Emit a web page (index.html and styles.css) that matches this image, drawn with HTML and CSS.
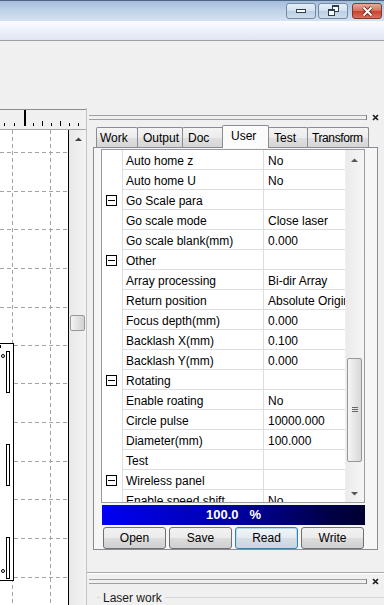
FILE: index.html
```html
<!DOCTYPE html>
<html lang="en">
<head>
    <meta charset="UTF-8">
    <title>Laser Parameter</title>
    <link rel="stylesheet" href="styles.css">
</head>
<body>
    <div class="titlebar">
        <span class="cbtn">
            <svg width="12" height="6" viewBox="0 0 12 6"><rect x="1.5" y="1.5" width="9" height="3" fill="#fff" stroke="#2c3e55"/></svg>
        </span>
        <span class="cbtn restore">
            <svg width="13" height="12" viewBox="0 0 13 12"><rect x="5.5" y="0.5" width="6" height="6" fill="#fff" stroke="#2c3e55"/><rect x="1.5" y="4.5" width="6" height="6" fill="#fff" stroke="#2c3e55"/><path d="M2 5.5H7M6 1.5H11" stroke="#2c3e55"/></svg>
        </span>
        <span class="cbtn close">
            <svg width="13" height="11" viewBox="0 0 13 11"><path d="M2.5 1.5L10.5 9.5M10.5 1.5L2.5 9.5" stroke="#5a1c14" stroke-width="3.6"/><path d="M2.5 1.5L10.5 9.5M10.5 1.5L2.5 9.5" stroke="#fff" stroke-width="2"/></svg>
        </span>
    </div>
    <div class="menubar"></div>

    <div class="main">
        <!-- drawing view -->
        <div class="view">
            <div class="view-inner">
                <svg class="ruler" width="86" height="22" viewBox="0 0 86 22">
                    <path d="M0 1.5H86" stroke="#8c8c8c"/>
                    <path d="M0 21.5H86" stroke="#a8a8a8"/>
                    <g stroke="#000">
                        <path d="M4.5 15V18M14.5 15V18M33.5 15V18M51.5 15V18M69.5 15V18M78.5 15V18"/>
                        <path d="M42.5 13V18M60.5 13V18"/>
                        <path d="M25 2V18" stroke-width="2"/>
                    </g>
                </svg>
                <div class="view-body">
                    <svg class="canvas" width="69" height="475" viewBox="0 0 69 475">
                        <rect width="69" height="475" fill="#fff"/>
                        <g stroke="#a4a4a4" stroke-dasharray="4 3" fill="none">
                            <path d="M12.5 0V475M50.5 0V475"/>
                            <path d="M0 22.5H68M0 61.5H68M0 99.5H68M0 138.5H68M0 177.5H68M0 215.5H68M0 253.5H68M0 292.5H68M0 331.5H68M0 369.5H68M0 408.5H68M0 447.5H68"/>
                        </g>
                        <path d="M68.5 0V475" stroke="#000"/>
                        <rect x="-2" y="213.5" width="15.5" height="237" fill="#fff" stroke="#000"/>
                        <g fill="#fff" stroke="#000">
                            <rect x="6.5" y="221.5" width="3" height="41"/>
                            <rect x="6.5" y="314.5" width="3" height="41"/>
                            <rect x="6.5" y="407.5" width="3" height="41"/>
                            <circle cx="3" cy="226" r="1.5"/>
                            <circle cx="3" cy="441" r="1.5"/>
                        </g>
                        <rect x="0" y="215" width="1" height="3" fill="#000"/>
                    </svg>
                    <div class="vbar">
                        <svg class="arrow" width="17" height="17" viewBox="0 0 17 17"><path d="M6 11H13L9.5 7.5Z" fill="#444"/></svg>
                        <div class="vthumb"></div>
                    </div>
                </div>
            </div>
        </div>

        <!-- parameter dock -->
        <div class="dock">
            <div class="dock-head">
                <span class="grip"></span>
                <span class="grip-end"></span>
                <svg class="dock-x" width="7" height="7" viewBox="0 0 7 7"><path d="M1 1L6 6M6 1L1 6" stroke="#1a1a1a" stroke-width="1.6"/></svg>
            </div>

            <div class="tabs">
                <div class="tab w-work">Work</div>
                <div class="tab w-output">Output</div>
                <div class="tab w-doc">Doc</div>
                <div class="tab w-user active">User</div>
                <div class="tab w-test">Test</div>
                <div class="tab w-transform">Transform</div>
            </div>

            <div class="pane">
                <div class="grid">
                    <div class="rows">
                        <div class="row"><span class="mg"></span><span class="nm">Auto home z</span><span class="vl">No</span></div>
                        <div class="row"><span class="mg"></span><span class="nm">Auto home U</span><span class="vl">No</span></div>
                        <div class="row"><span class="mg"><i class="box"></i></span><span class="nm">Go Scale para</span><span class="vl"></span></div>
                        <div class="row"><span class="mg"></span><span class="nm">Go scale mode</span><span class="vl">Close laser</span></div>
                        <div class="row"><span class="mg"></span><span class="nm">Go scale blank(mm)</span><span class="vl">0.000</span></div>
                        <div class="row"><span class="mg"><i class="box"></i></span><span class="nm">Other</span><span class="vl"></span></div>
                        <div class="row"><span class="mg"></span><span class="nm">Array processing</span><span class="vl">Bi-dir Array</span></div>
                        <div class="row"><span class="mg"></span><span class="nm">Return position</span><span class="vl">Absolute Origin</span></div>
                        <div class="row"><span class="mg"></span><span class="nm">Focus depth(mm)</span><span class="vl">0.000</span></div>
                        <div class="row"><span class="mg"></span><span class="nm">Backlash X(mm)</span><span class="vl">0.100</span></div>
                        <div class="row"><span class="mg"></span><span class="nm">Backlash Y(mm)</span><span class="vl">0.000</span></div>
                        <div class="row"><span class="mg"><i class="box"></i></span><span class="nm">Rotating</span><span class="vl"></span></div>
                        <div class="row"><span class="mg"></span><span class="nm">Enable roating</span><span class="vl">No</span></div>
                        <div class="row"><span class="mg"></span><span class="nm">Circle pulse</span><span class="vl">10000.000</span></div>
                        <div class="row"><span class="mg"></span><span class="nm">Diameter(mm)</span><span class="vl">100.000</span></div>
                        <div class="row"><span class="mg"></span><span class="nm">Test</span><span class="vl"></span></div>
                        <div class="row"><span class="mg"><i class="box"></i></span><span class="nm">Wireless panel</span><span class="vl"></span></div>
                        <div class="row"><span class="mg"></span><span class="nm">Enable speed shift</span><span class="vl">No</span></div>
                    </div>
                    <div class="gbar">
                        <svg class="arrow" width="17" height="17" viewBox="0 0 17 17"><path d="M5 12H12L8.5 8.5Z" fill="#555"/></svg>
                        <div class="track">
                            <div class="gthumb"><span class="lines"></span></div>
                        </div>
                        <svg class="arrow" width="17" height="17" viewBox="0 0 17 17"><path d="M5 7H12L8.5 10.5Z" fill="#555"/></svg>
                    </div>
                </div>

                <div class="progress">100.0&nbsp;&nbsp;&nbsp;%</div>

                <div class="buttons">
                    <button class="btn">Open</button>
                    <button class="btn">Save</button>
                    <button class="btn focus">Read</button>
                    <button class="btn">Write</button>
                </div>
            </div>

            <div class="split"></div>

            <div class="dock-head">
                <span class="grip"></span>
                <span class="grip-end"></span>
                <svg class="dock-x" width="7" height="7" viewBox="0 0 7 7"><path d="M1 1L6 6M6 1L1 6" stroke="#1a1a1a" stroke-width="1.6"/></svg>
            </div>

            <div class="group-title">Laser work</div>
        </div>
    </div>
</body>
</html>
```

FILE: styles.css
```css
* {
    box-sizing: border-box;
}
body {
    margin: 0;
    width: 384px;
    height: 605px;
    overflow: hidden;
    font-family: "Liberation Sans", Arial, sans-serif;
    font-size: 12px;
    color: #000;
    background: #f0f0f0;
}

/* window caption */
.titlebar {
    height: 21px;
    display: flex;
    justify-content: flex-end;
    padding: 2px 2px 0 0;
    border-top: 1px solid #4f6684;
    background: linear-gradient(#a3bcda, #bdd1e7 45%, #d4e2f1);
}
.cbtn {
    width: 30px;
    height: 16px;
    margin-left: 2px;
    display: flex;
    align-items: center;
    justify-content: center;
    border: 1px solid #7489a6;
    border-radius: 3px;
    background: linear-gradient(#e6eef7, #d3e0ee 48%, #bccfe4 52%, #cddced);
}
.cbtn.restore {
    margin-right: 2px;
}
.cbtn.close {
    margin-left: 2px;
    border-color: #86362c;
    background: linear-gradient(#eaaa9c, #d8705e 48%, #c8432f 52%, #d9705c);
}
.menubar {
    height: 20px;
    border-bottom: 1px solid #a0a0a0;
    background: linear-gradient(#fbfcfe, #eef2fa 45%, #dfe6f4);
}

.main {
    display: flex;
    height: 564px;
}

/* drawing view */
.view {
    width: 87px;
    padding-top: 67px;
}
.view-inner {
    border-right: 1px solid #c4c4c4;
}
.ruler {
    display: block;
}
.view-body {
    display: flex;
}
.canvas {
    display: block;
    flex: none;
}
.vbar {
    width: 17px;
    height: 475px;
    background: linear-gradient(to right, #e8e8e8, #f3f3f3);
}
.arrow {
    display: block;
    flex: none;
}
.vthumb {
    width: 15px;
    height: 16px;
    margin: 168px 0 0 1px;
    border: 1px solid #999;
    border-radius: 2px;
    background: linear-gradient(to right, #f4f4f4, #e2e2e2 50%, #d2d2d2);
}

/* parameter dock */
.dock {
    flex: 1;
    padding-top: 72px;
    display: flex;
    flex-direction: column;
}
.dock-head {
    height: 10px;
    display: flex;
    align-items: center;
    padding-left: 2px;
}
.grip {
    width: 277px;
    height: 5px;
    border-top: 1px solid #a0a0a0;
    border-bottom: 1px solid #a0a0a0;
}
.grip-end {
    width: 1px;
    height: 5px;
    background: #808080;
}
.dock-x {
    margin-left: 5px;
}

.tabs {
    position: relative;
    z-index: 1;
    height: 26px;
    display: flex;
    align-items: flex-end;
    padding-left: 9px;
}
.tab {
    height: 20px;
    margin-left: -1px;
    padding: 2px 0 0 5px;
    line-height: 17px;
    white-space: nowrap;
    border: 1px solid #898c95;
    border-bottom: none;
    border-radius: 2px 2px 0 0;
    background: linear-gradient(#f4f4f4, #ececec 50%, #e0e0e0 51%, #d6d6d6);
}
.tab:first-child {
    margin-left: 0;
    padding-left: 3px;
}
.w-work { width: 42px; }
.w-output { width: 46px; }
.w-doc { width: 42px; }
.w-user { width: 47px; }
.w-test { width: 40px; }
.w-transform {
    width: 62px;
    padding-left: 4px;
    letter-spacing: -0.4px;
}
.tab.active {
    position: relative;
    height: 23px;
    margin-left: -2px;
    margin-bottom: -1px;
    padding: 2px 0 0 8px;
    line-height: 17px;
    background: #fbfbfb;
}

.pane {
    width: 285px;
    height: 406px;
    margin-left: 6px;
    padding: 1px 0 0 7px;
    border: 1px solid #898c95;
    background: #f6f6f6;
}

/* property grid */
.grid {
    width: 264px;
    height: 354px;
    display: flex;
    overflow: hidden;
    border: 1px solid #9c9c9c;
    background: #fff;
}
.rows {
    width: 243px;
    overflow: hidden;
}
.row {
    display: flex;
    height: 20px;
}
.mg {
    width: 21px;
    flex: none;
    display: flex;
    align-items: center;
    padding: 1px 0 0 4px;
    border-right: 1px solid #dedede;
}
.box {
    width: 11px;
    height: 11px;
    border: 1px solid #000;
    background: linear-gradient(#000, #000) center / 7px 1px no-repeat, #fff;
}
.nm,
.vl {
    padding-top: 3px;
    line-height: 16px;
    white-space: nowrap;
    overflow: hidden;
    border-bottom: 1px solid #dedede;
}
.nm {
    width: 141px;
    flex: none;
    padding-left: 3px;
    border-right: 1px solid #dedede;
}
.vl {
    flex: 1;
    padding-left: 4px;
}
.gbar {
    width: 19px;
    display: flex;
    flex-direction: column;
    border-left: 1px solid #efefef;
    background: linear-gradient(to right, #ebebeb, #f5f5f5);
}
.track {
    flex: 1;
}
.gthumb {
    width: 15px;
    height: 104px;
    margin: 191px 0 0 1px;
    display: flex;
    align-items: center;
    justify-content: center;
    border: 1px solid #979797;
    border-radius: 2px;
    background: linear-gradient(to right, #f5f5f5, #e6e6e6 50%, #d8d8d8);
}
.lines {
    width: 6px;
    height: 5px;
    border-top: 1px solid #666;
    border-bottom: 1px solid #666;
    background: linear-gradient(#666, #666) center / 6px 1px no-repeat;
}

.progress {
    width: 263px;
    height: 20px;
    margin: 2px 0 0 1px;
    line-height: 20px;
    text-align: center;
    font-size: 13px;
    font-weight: bold;
    color: #fff;
    background: linear-gradient(to right, #0000f4, #0000b0 45%, #00004a 85%, #000030);
}

.buttons {
    display: flex;
    gap: 3px;
    margin: 2px 0 0 2px;
}
.btn {
    width: 63px;
    height: 22px;
    padding: 1px 0 0;
    font-family: inherit;
    font-size: 12px;
    color: #000;
    border: 1px solid #707070;
    border-radius: 3px;
    background: linear-gradient(#f2f2f2, #ebebeb 50%, #dddddd 51%, #cfcfcf);
}
.btn.focus {
    border-color: #3c7fb1;
    box-shadow: inset 0 0 0 1px #b4dcf2;
    background: linear-gradient(#f0f5f9, #e4ebf1 50%, #d6dee6 51%, #ccd6df);
}

.split {
    height: 2px;
    margin-top: 22px;
    border-top: 1px solid #a8a8a8;
    border-bottom: 1px solid #fff;
}
.split + .dock-head {
    margin-top: 3px;
}

.group-title {
    display: flex;
    align-items: center;
    gap: 3px;
    height: 14px;
    margin-top: 5px;
    padding-left: 10px;
    line-height: 14px;
    color: #1a1a1a;
}
.group-title::before {
    content: "";
    width: 3px;
    border-top: 1px solid #d5d5d5;
}
.group-title::after {
    content: "";
    flex: 1;
    border-top: 1px solid #d5d5d5;
}
```
